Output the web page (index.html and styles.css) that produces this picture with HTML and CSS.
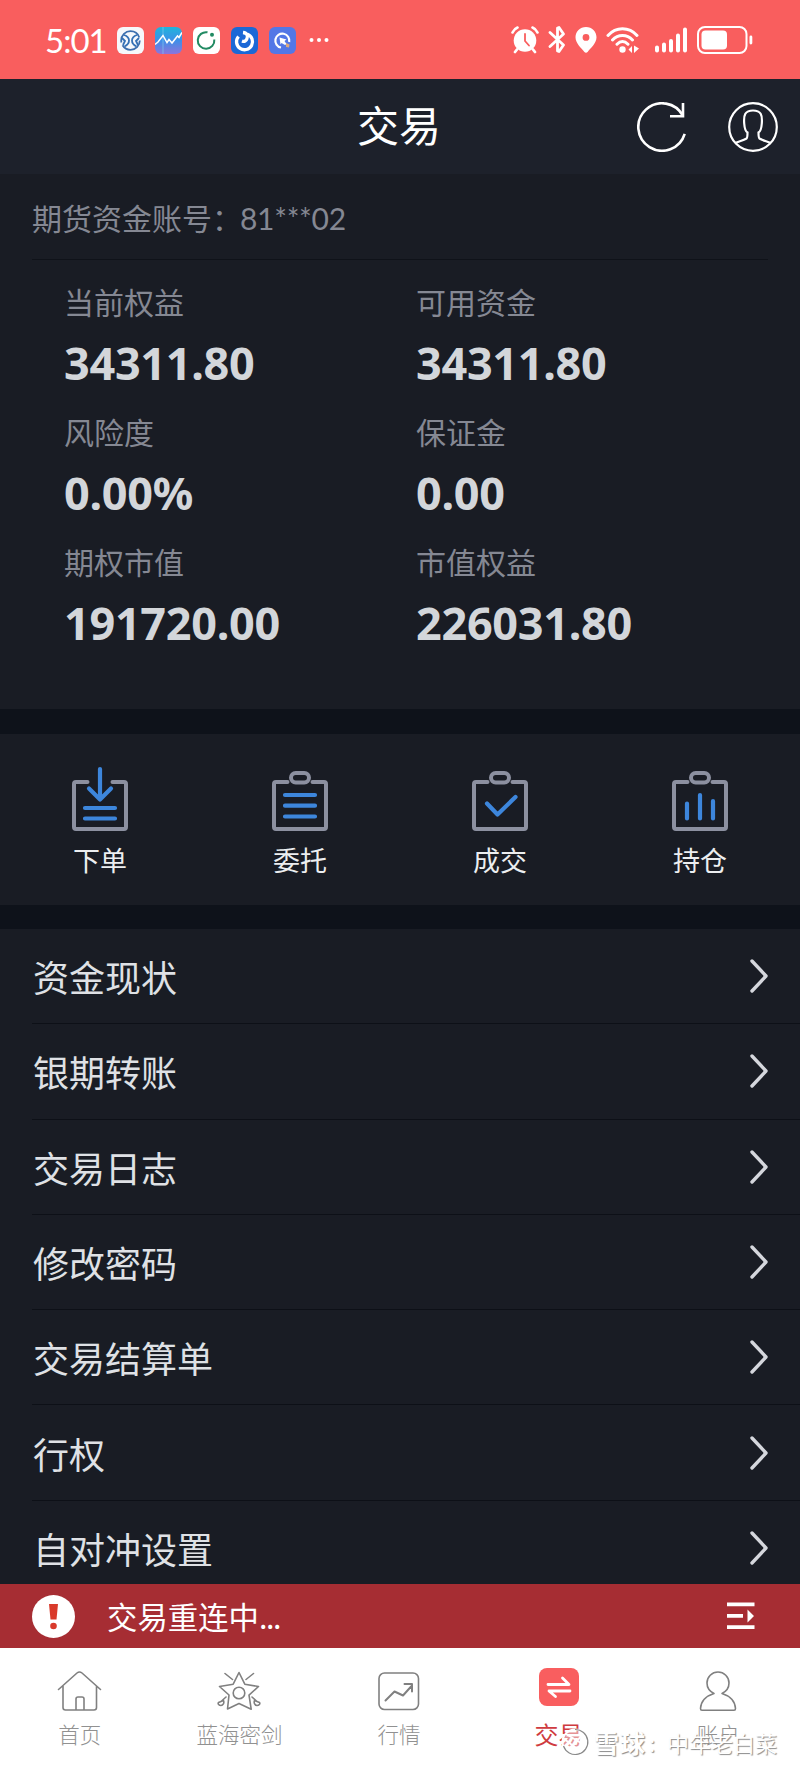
FILE: index.html
```html
<!DOCTYPE html>
<html lang="zh-CN">
<head>
  <meta charset="UTF-8" />
  <meta name="viewport" content="width=device-width, initial-scale=1.0" />
  <title>交易</title>
  <link rel="stylesheet" href="styles.css">
</head>
<body>
  <div class="status-bar">
    <span class="time">5:01</span>
    <div class="apps">
      <svg width="27" height="27" viewBox="0 0 27 27" fill="none">
        <rect width="27" height="27" rx="6" fill="#f6f8fb"/>
        <circle cx="13.5" cy="13.5" r="9.3" stroke="#3d6fae" stroke-width="1.8" stroke-dasharray="24 3 28 3"/>
        <path d="M7 8c3 1 5 3 5 5.500s-1.500 4.500-4.500 6M5 11l3 3-2 4M20 8c-3 1-5 3-5 5.500s1.500 4.500 4.500 6M22 11l-3 3 2 4" stroke="#3470b5" stroke-width="1.800"/>
      </svg>
      <svg width="27" height="27" viewBox="0 0 27 27" fill="none">
        <defs>
          <linearGradient id="sky" x1="0" y1="0" x2="0" y2="1">
            <stop offset="0" stop-color="#20b4dc"/>
            <stop offset=".5" stop-color="#3d8fe8"/>
            <stop offset="1" stop-color="#8d74dc"/>
          </linearGradient>
        </defs>
        <rect width="27" height="27" rx="6" fill="url(#sky)"/>
        <path d="M8 0v27" stroke="#7fc8ee" stroke-width=".7"/>
        <path d="M0 17.500l3-2.500 5-6.500 4 7 2-3 3 3.500 5.500-7 1.500 1.500L27 5.500" stroke="#fff" stroke-width="1.500"/>
      </svg>
      <svg width="27" height="27" viewBox="0 0 27 27" fill="none">
        <rect width="27" height="27" rx="6" fill="#fff"/>
        <path d="M14.500 5.300A8.300 8.300 0 1 0 21.300 12.500" stroke="#218a62" stroke-width="2"/>
        <circle cx="19" cy="7.800" r="2" fill="#218a62"/>
      </svg>
      <svg width="27" height="27" viewBox="0 0 27 27" fill="none">
        <rect width="27" height="27" rx="6" fill="#1b68d6"/>
        <path d="M7.500 9.500a8 8 0 1 0 9-2.200M12 5.500c4.500.5 5 3.500 4 6-.8 2.500-2.500 3.500-5 2.500" stroke="#fff" stroke-width="3.300"/>
      </svg>
      <svg width="27" height="27" viewBox="0 0 27 27" fill="none">
        <rect width="27" height="27" rx="6" fill="#5377e6"/>
        <path d="M12 20.500A7 7 0 1 1 20.200 15" stroke="#fff" stroke-width="2.200"/>
        <path d="M10.500 10.500l7 2-2 1.500 2 3-1.500 1-3.500-2-1 1.500z" fill="#fff"/>
        <path d="M17 16l3.500 1.500-.5 3-3-.5z" fill="#d9a981"/>
      </svg>
    </div>
    <svg class="more" width="20" height="6" viewBox="0 0 20 6" fill="#fff">
      <circle cx="2.500" cy="3" r="2"/><circle cx="10" cy="3" r="2"/><circle cx="17.500" cy="3" r="2"/>
    </svg>
    <div class="signals">
      <svg class="alarm" width="28" height="28" viewBox="0 0 28 28" fill="none" stroke="#fff" stroke-linecap="round">
        <circle cx="14" cy="14.500" r="11.300" fill="#fff" stroke="none"/>
        <path d="M1.500 6.500C2.500 4 4 2.500 6.500 1.500M26.500 6.500C25.500 4 24 2.500 21.500 1.500" stroke-width="2.600"/>
        <path d="M6 23.500l-2 2.500M22 23.500l2 2.500" stroke-width="2.800"/>
        <path d="M14 8v7l4 4.500" stroke="#f95e5e" stroke-width="1.800"/>
      </svg>
      <svg class="bluetooth" width="18" height="28" viewBox="0 0 18 28" fill="none" stroke="#fff" stroke-width="2.800" stroke-linejoin="round" stroke-linecap="round">
        <path d="M2 6.500l13.500 12.500-4.500 6.500-1.500-.5V2l1.500-.5L15.500 8 2 20.500"/>
      </svg>
      <svg class="pin" width="22" height="28" viewBox="0 0 22 28">
        <path d="M11 1C5 1 .5 5.500.5 11.300c0 6 6 11 8.700 14.500 1 1.200 2.600 1.200 3.600 0 2.700-3.500 8.700-8.500 8.700-14.500C21.500 5.500 17 1 11 1zm0 7a3.400 3.400 0 1 1 0 6.800A3.400 3.400 0 0 1 11 8z" fill="#fff"/>
      </svg>
      <svg class="wifi" width="34" height="28" viewBox="0 0 34 28" fill="none" stroke="#fff" stroke-width="3" stroke-linecap="round">
        <path d="M2 9.500C10 .5 23 .5 31 9.500M6.500 14c5.500-6 14.500-6 20 0M11 18.200c3.500-3.500 7.500-3.500 11 0"/>
        <circle cx="16.500" cy="23.500" r="3.200" fill="#fff" stroke="none"/>
        <path d="M22.500 23.500l3.500-3.500v7zM33 22.500l-5-3v7.500z" fill="#fff" stroke="none"/>
      </svg>
      <svg class="cell" width="34" height="28" viewBox="0 0 34 28" stroke="#fff" stroke-width="4" stroke-linecap="round">
        <path d="M3 21.500v3M10 18.500v6M17 15v9.500M24 9.500v15M31 3.500v21"/>
      </svg>
      <svg class="battery" width="56" height="28" viewBox="0 0 56 28">
        <rect x="1" y="1" width="48.500" height="26" rx="7" fill="none" stroke="#fff" stroke-width="2"/>
        <rect x="4.500" y="4.500" width="25.500" height="19" rx="4" fill="#fff"/>
        <rect x="52.500" y="9.500" width="2.800" height="9" rx="1.400" fill="#fff"/>
      </svg>
    </div>
  </div>

  <header>
    <h1>交易</h1>
    <div class="header-actions">
      <svg width="50" height="50" viewBox="0 0 50 50" fill="none" stroke="#fff" stroke-width="2.600">
        <path d="M47.700 31.800A23.700 23.700 0 1 1 46 14M46 1v13.300H33"/>
      </svg>
      <svg width="50" height="50" viewBox="0 0 50 50" fill="none" stroke="#fff" stroke-width="2.200">
        <circle cx="25" cy="25" r="23.800"/>
        <path d="M7.500 41c3-1.500 8-2.500 11-4.500.8-.6 1-1 1-6-2-1-3-5-3.300-9C15.500 13 17 8.500 25 8.500s9.500 4.500 8.800 13c-.3 4-1.300 8-3.300 9 0 5 .2 5.400 1 6 3 2 8 3 11 4.500"/>
      </svg>
    </div>
  </header>

  <main>
    <section class="account">
      <p class="account-no">期货资金账号：<span class="no">81***02</span></p>
      <dl class="funds">
        <div><dt>当前权益</dt><dd>34311.80</dd></div>
        <div><dt>可用资金</dt><dd>34311.80</dd></div>
        <div><dt>风险度</dt><dd>0.00%</dd></div>
        <div><dt>保证金</dt><dd>0.00</dd></div>
        <div><dt>期权市值</dt><dd>191720.00</dd></div>
        <div><dt>市值权益</dt><dd>226031.80</dd></div>
      </dl>
    </section>

    <nav class="quick">
      <a class="quick-item">
        <svg width="56" height="66" viewBox="0 0 56 66">
          <path class="frame" d="M15.500 16H4q-2 0-2 2v43q0 2 2 2h48q2 0 2-2V18q0-2-2-2H40.500"/>
          <path class="mark" d="M28 3v30M17 22.500L28 33.500l11-11M13 42h30M13 52.500h30"/>
        </svg>
        下单
      </a>
      <a class="quick-item">
        <svg width="56" height="66" viewBox="0 0 56 66">
          <path class="frame" d="M15.500 16H4q-2 0-2 2v43q0 2 2 2h48q2 0 2-2V18q0-2-2-2H40.500"/>
          <rect class="frame" x="19" y="7" width="18" height="9.500" rx="4.700"/>
          <path class="mark" d="M13 29h30M13 39.700h30M13 50.500h30"/>
        </svg>
        委托
      </a>
      <a class="quick-item">
        <svg width="56" height="66" viewBox="0 0 56 66">
          <path class="frame" d="M15.500 16H4q-2 0-2 2v43q0 2 2 2h48q2 0 2-2V18q0-2-2-2H40.500"/>
          <rect class="frame" x="19" y="7" width="18" height="9.500" rx="4.700"/>
          <path class="mark" d="M15 37.500L25.500 48.500 43.500 31"/>
        </svg>
        成交
      </a>
      <a class="quick-item">
        <svg width="56" height="66" viewBox="0 0 56 66">
          <path class="frame" d="M15.500 16H4q-2 0-2 2v43q0 2 2 2h48q2 0 2-2V18q0-2-2-2H40.500"/>
          <rect class="frame" x="19" y="7" width="18" height="9.500" rx="4.700"/>
          <path class="mark" d="M15 37.500v15M28 29v23.500M41 35v17.500"/>
        </svg>
        持仓
      </a>
    </nav>

    <ul class="menu">
      <li>资金现状<svg width="18" height="34" viewBox="0 0 18 34"><path d="M2 2l14 15L2 32"/></svg></li>
      <li>银期转账<svg width="18" height="34" viewBox="0 0 18 34"><path d="M2 2l14 15L2 32"/></svg></li>
      <li>交易日志<svg width="18" height="34" viewBox="0 0 18 34"><path d="M2 2l14 15L2 32"/></svg></li>
      <li>修改密码<svg width="18" height="34" viewBox="0 0 18 34"><path d="M2 2l14 15L2 32"/></svg></li>
      <li>交易结算单<svg width="18" height="34" viewBox="0 0 18 34"><path d="M2 2l14 15L2 32"/></svg></li>
      <li>行权<svg width="18" height="34" viewBox="0 0 18 34"><path d="M2 2l14 15L2 32"/></svg></li>
      <li>自对冲设置<svg width="18" height="34" viewBox="0 0 18 34"><path d="M2 2l14 15L2 32"/></svg></li>
    </ul>
  </main>

  <div class="alert">
    <svg width="43" height="43" viewBox="0 0 43 43">
      <circle cx="21.500" cy="21.500" r="21.500" fill="#fff"/>
      <path d="M17 9h9l-1.500 15.500h-6z" fill="#d93a2b"/>
      <circle cx="21.500" cy="31" r="3.300" fill="#d93a2b"/>
    </svg>
    <span class="alert-text">交易重连中<span class="dots">...</span></span>
    <svg width="28" height="28" viewBox="0 0 28 28" fill="#fff">
      <path d="M0 .5h27.500v3.800H0zM0 12h16v3.800H0zM0 23.200h27.500V27H0zM20.500 7.500l6.500 6.500-6.500 6.500z"/>
    </svg>
  </div>

  <footer>
    <a class="tab">
      <svg width="46" height="46" viewBox="0 0 46 46">
        <path d="M1.500 22.500L20 6q2.500-2 5 0l18.500 16.500M6 19v21.500q0 2.500 2.500 2.500H37q2.500 0 2.500-2.500V19M19 43V32q0-2 2-2h4q2 0 2 2v11"/>
      </svg>
      首页
    </a>
    <a class="tab">
      <svg width="46" height="46" viewBox="0 0 46 46">
        <path d="M23 5.500l5.800 11.700 13.700 2.300-9.500 8.700 2.200 14L23 36.500 11.500 42l1.500-14-9.500-8.500 13.700-2.300z"/>
        <circle cx="23" cy="26" r="5.800"/>
        <path d="M9 6.500l7.500 6M37.500 6.500l-7.500 6M10 30l-5 4.500M36 30l5 4.500M7.500 33.500c1 2.500-.5 5-2.500 5s-3.500-1.500-2.500-3zM38.500 33.500c-1 2.500.5 5 2.500 5s3.500-1.500 2.500-3z"/>
      </svg>
      蓝海密剑
    </a>
    <a class="tab">
      <svg width="46" height="46" viewBox="0 0 46 46">
        <rect x="3" y="6" width="39.500" height="36.500" rx="5.500"/>
        <path d="M9.500 33.500L18.500 24.500l8.500 4 9-10M28.500 17h7.500v7.500" stroke-width="2"/>
      </svg>
      行情
    </a>
    <a class="tab active">
      <svg width="46" height="46" viewBox="0 0 46 46">
        <rect x="3" y="1" width="40" height="38" rx="8" fill="#f95e5f" stroke="none"/>
        <path d="M12 17.500h21l-6.500-6.500M34 24H13l6.500 5.500" stroke="#fff" stroke-width="2.800"/>
      </svg>
      交易
    </a>
    <a class="tab">
      <svg width="46" height="46" viewBox="0 0 46 46">
        <path d="M19 26.500C14 24 12 20 12 16a11 11 0 0 1 22 0c0 4-2 8-7 10.500 8 2.500 13 8 13.500 15 0 1.200-.5 1.700-1.500 1.700H7c-1 0-1.500-.5-1.500-1.700.5-7 5.500-12.500 13.500-15z"/>
      </svg>
      账户
    </a>
    <div class="watermark">
      <svg width="28" height="28" viewBox="0 0 28 28" fill="none">
        <circle cx="14" cy="14" r="12.500" fill="#fff" fill-opacity=".45" stroke="#fff" stroke-width="2"/>
        <path d="M2.500 18A12.500 12.500 0 1 0 14 1.500" stroke="#8a8a8a" stroke-width="1.200"/>
        <path d="M2 10l18 14M5 6l15 9M12 18l8-10" stroke="#fff" stroke-width="2"/>
      </svg>
      <span class="brand">雪球</span><span class="colon">:</span><span class="user">中年老白菜</span>
    </div>
  </footer>
</body>
</html>
```
FILE: styles.css
```css
* {
  box-sizing: border-box;
}
body {
  margin: 0;
  height: 1768px;
  overflow: hidden;
  display: flex;
  flex-direction: column;
  background-color: #0e121a;
  color: #dfe1e5;
  font-family: "Noto Sans CJK SC", sans-serif;
}
svg {
  display: block;
  flex: none;
}
.status-bar {
  height: 79px;
  flex: none;
  display: flex;
  align-items: center;
  padding: 1px 47px 0 45px;
  background-color: #f95e5e;
  color: #fff;
}
.time {
  width: 72px;
  font-family: Lato, sans-serif;
  font-size: 33px;
  line-height: 40px;
  letter-spacing: -1px;
}
.apps {
  display: flex;
  gap: 11px;
}
.more {
  margin-left: 13px;
}
.signals {
  display: flex;
  margin-left: auto;
}
.bluetooth {
  margin-left: 9px;
}
.pin {
  margin-left: 9px;
}
.wifi {
  margin-left: 9px;
}
.cell {
  margin-left: 14px;
}
.battery {
  margin-left: 9px;
}
header {
  height: 95px;
  flex: none;
  display: grid;
  grid-template-columns: 1fr auto 1fr;
  align-items: center;
  padding: 0 22px 0 20px;
  background-color: #1d212b;
  color: #fff;
}
h1 {
  grid-column: 2;
  margin: 0;
  padding-bottom: 5px;
  font-size: 42px;
  line-height: 60px;
  font-weight: 400;
}
.header-actions {
  display: flex;
  justify-content: flex-end;
  gap: 41px;
}
main {
  flex: 1;
  min-height: 0;
  overflow: hidden;
}
.account {
  height: 535px;
  padding: 0 32px;
  background-color: #191c24;
}
.account-no {
  height: 86px;
  margin: 0;
  border-bottom: 1px solid #0f1219;
  color: #858893;
  font-size: 30px;
  line-height: 86px;
}
.no {
  margin-left: -2px;
  font-family: Lato, sans-serif;
  letter-spacing: -0.3px;
}
.funds {
  display: grid;
  grid-template-columns: 352px 1fr;
  grid-auto-rows: 130px;
  margin: 0;
  padding: 21px 0 0 32px;
}
.funds dt {
  color: #858893;
  font-size: 30px;
  line-height: 40px;
}
.funds dd {
  margin: 12px 0 0;
  color: #d3d6da;
  font-family: "Noto Sans", sans-serif;
  font-size: 45px;
  font-weight: 700;
  line-height: 60px;
  letter-spacing: -0.3px;
}
.quick {
  height: 171px;
  margin: 25px 0 24px;
  padding-top: 32px;
  display: grid;
  grid-template-columns: repeat(4, 1fr);
  background-color: #191c24;
}
.quick-item {
  display: flex;
  flex-direction: column;
  align-items: center;
  gap: 8px;
  color: #eceef0;
  font-size: 27px;
  line-height: 40px;
}
.frame {
  fill: none;
  stroke: #8c90a0;
  stroke-width: 4;
  stroke-linecap: round;
}
.mark {
  fill: none;
  stroke: #3d86dc;
  stroke-width: 4.2;
  stroke-linecap: round;
  stroke-linejoin: round;
}
.menu {
  margin: 0;
  padding: 0 0 0 32px;
  list-style: none;
  background-color: #191c24;
}
.menu li {
  height: 95.3px;
  display: flex;
  align-items: center;
  justify-content: space-between;
  padding: 0 32px 0 1px;
  border-bottom: 1px solid #0d1017;
  font-size: 36px;
  line-height: 54px;
}
.menu path {
  fill: none;
  stroke: #d5d7dd;
  stroke-width: 3.4;
  stroke-linecap: round;
  stroke-linejoin: round;
}
.alert {
  height: 64px;
  flex: none;
  display: flex;
  align-items: center;
  padding: 0 45px 0 32px;
  background-color: #a62d33;
  color: #fff;
}
.alert-text {
  flex: 1;
  margin-left: 32px;
  font-size: 30.4px;
  line-height: 44px;
}
.dots {
  letter-spacing: -1.4px;
}
footer {
  position: relative;
  height: 120px;
  flex: none;
  display: grid;
  grid-template-columns: repeat(5, 1fr);
  padding: 19px 2px 0 0;
  background-color: #fff;
}
.tab {
  display: flex;
  flex-direction: column;
  align-items: center;
  color: #919191;
  font-size: 21.5px;
  font-weight: 300;
  line-height: 41px;
}
.tab svg {
  fill: none;
  stroke: #808080;
  stroke-width: 1.6;
  stroke-linejoin: round;
  stroke-linecap: round;
}
.active {
  color: #cf3b40;
  font-size: 24px;
  font-weight: 400;
}
/* sits over the last two tabs */
.watermark {
  position: absolute;
  left: 561px;
  bottom: 10px;
  display: flex;
  align-items: center;
  color: #fff;
  font-size: 22px;
  line-height: 32px;
  text-shadow: 1px 1px 1px #8a8a8a;
}
.brand {
  margin-left: 5px;
  font-size: 25px;
  font-weight: 700;
  letter-spacing: 1px;
}
.colon {
  width: 21px;
  padding-left: 3px;
}
```
